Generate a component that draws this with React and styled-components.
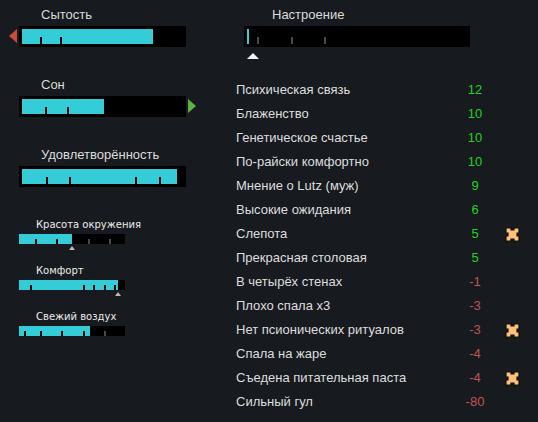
import React from 'react';
import styled, { createGlobalStyle } from 'styled-components';

const GlobalStyle = createGlobalStyle`
  html, body {
    margin: 0;
    background: #171a1e;
  }
  body {
    font-family: "Liberation Sans", Arial, sans-serif;
    color: #dcdcdc;
  }
`;

const CYAN = '#33ccd7';

const Page = styled.div`
  display: flex;
  width: 538px;
  height: 422px;
  overflow: hidden;
`;

const LeftColumn = styled.div`
  width: 220px;
  padding: 7px 0 0 19px;
  box-sizing: border-box;
  display: flex;
  flex-direction: column;
`;

const NeedBlock = styled.div`
  display: flex;
  flex-direction: column;
  gap: 3px;
  margin-bottom: 30px;
`;

const NeedLabel = styled.div`
  font-size: 13px;
  line-height: 16px;
  padding-left: ${({ indent }) => indent || 22}px;
`;

const BigBar = styled.div`
  position: relative;
  width: ${({ width }) => width}px;
  height: 21px;
  padding: 3px;
  box-sizing: border-box;
  background: #000;
`;

const BarInner = styled.div`
  position: relative;
  width: 100%;
  height: 100%;
`;

const Fill = styled.div`
  height: 100%;
  background: ${CYAN};
`;

const Tick = styled.div`
  position: absolute;
  bottom: 0;
  width: 2px;
  height: ${({ h }) => h}px;
  background: ${({ light }) => (light ? '#4a4a4a' : '#000')};
`;

const Arrow = styled.div`
  position: absolute;
  top: 3px;
  width: 0;
  height: 0;
  border-top: 7.5px solid transparent;
  border-bottom: 7.5px solid transparent;
  ${({ dir }) =>
    dir === 'left'
      ? `left: -10px; border-right: 8px solid #c84b3c;`
      : `right: -10px; border-left: 8px solid #5bb443;`}
`;

const SmallSection = styled.div`
  margin-top: 2px;
  display: flex;
  flex-direction: column;
  gap: 15px;
`;

const SmallBlock = styled.div`
  display: flex;
  flex-direction: column;
`;

const SmallLabel = styled.div`
  font-family: "DejaVu Sans", sans-serif;
  font-size: 10px;
  line-height: 12px;
  padding-left: 17px;
  margin-bottom: 3px;
  color: #ececec;
`;

const SmallBar = styled.div`
  position: relative;
  width: 106px;
  height: 10px;
  background: #000;
`;

const MarkerRow = styled.div`
  position: relative;
  height: 6px;
  width: 106px;
`;

const SmallMarker = styled.div`
  position: absolute;
  top: 2px;
  width: 0;
  height: 0;
  border-left: 3px solid transparent;
  border-right: 3px solid transparent;
  border-bottom: 4px solid #b8b8b8;
`;

const RightColumn = styled.div`
  flex: 1;
  padding-top: 7px;
  display: flex;
  flex-direction: column;
`;

const MoodBlock = styled.div`
  display: flex;
  flex-direction: column;
  gap: 3px;
  padding-left: 24px;
`;

const MoodMarker = styled.div`
  margin: 3px 0 0 3px;
  width: 0;
  height: 0;
  border-left: 6px solid transparent;
  border-right: 6px solid transparent;
  border-bottom: 6px solid #f2f2f2;
`;

const ThoughtList = styled.div`
  margin-top: 19px;
  padding-left: 16px;
  display: flex;
  flex-direction: column;
`;

const ThoughtRow = styled.div`
  display: grid;
  grid-template-columns: 220px 38px 27px;
  align-items: center;
  height: 24px;
  font-size: 13px;
  line-height: 24px;
`;

const ThoughtName = styled.span`
  color: #dedede;
  white-space: nowrap;
`;

const ThoughtValue = styled.span`
  text-align: center;
  color: ${({ positive }) => (positive ? '#22d322' : '#c05555')};
`;

const IconSlot = styled.span`
  display: flex;
  align-items: center;
  padding-left: 10px;
  svg {
    flex-shrink: 0;
  }
`;

const needs = [
  { label: 'Сытость', fill: 131, ticks: [18, 38], arrow: 'left' },
  { label: 'Сон', fill: 82, ticks: [23, 45], arrow: 'right' },
  { label: 'Удовлетворённость', fill: 155, ticks: [24, 47, 113, 137] },
];

const smallNeeds = [
  { label: 'Красота окружения', fill: 53, ticks: [16, 37, 69, 90], marker: true },
  { label: 'Комфорт', fill: 99, ticks: [11, 64, 74, 85, 95], marker: true },
  { label: 'Свежий воздух', fill: 71, ticks: [5, 21, 42, 64, 85] },
];

const thoughts = [
  { name: 'Психическая связь', value: '12' },
  { name: 'Блаженство', value: '10' },
  { name: 'Генетическое счастье', value: '10' },
  { name: 'По-райски комфортно', value: '10' },
  { name: 'Мнение о Lutz (муж)', value: '9' },
  { name: 'Высокие ожидания', value: '6' },
  { name: 'Слепота', value: '5', icon: true },
  { name: 'Прекрасная столовая', value: '5' },
  { name: 'В четырёх стенах', value: '-1' },
  { name: 'Плохо спала x3', value: '-3' },
  { name: 'Нет псионических ритуалов', value: '-3', icon: true },
  { name: 'Спала на жаре', value: '-4' },
  { name: 'Съедена питательная паста', value: '-4', icon: true },
  { name: 'Сильный гул', value: '-80' },
];

const IdeoIcon = () => (
  <svg width="17" height="17" viewBox="0 0 17 17">
    <path
      d="M2 2h5v2h3V2h5v5h-2v3h2v5h-5v-2H7v2H2v-5h2V7H2z"
      fill="#ffc27a"
      stroke="#140e06"
      strokeWidth="1.2"
      strokeLinejoin="miter"
    />
  </svg>
);

const App = () => (
  <>
    <GlobalStyle />
    <Page>
      <LeftColumn>
        {needs.map((n) => (
          <NeedBlock key={n.label}>
            <NeedLabel>{n.label}</NeedLabel>
            <BigBar width={167}>
              <BarInner>
                <Fill style={{ width: n.fill }} />
                {n.ticks.map((t) => (
                  <Tick key={t} h={7} style={{ left: t }} light={t > n.fill} />
                ))}
              </BarInner>
              {n.arrow && <Arrow dir={n.arrow} />}
            </BigBar>
          </NeedBlock>
        ))}
        <SmallSection>
          {smallNeeds.map((n) => (
            <SmallBlock key={n.label}>
              <SmallLabel>{n.label}</SmallLabel>
              <SmallBar>
                <Fill style={{ width: n.fill }} />
                {n.ticks.map((t) => (
                  <Tick key={t} h={5} style={{ left: t }} light={t > n.fill} />
                ))}
              </SmallBar>
              <MarkerRow>
                {n.marker && <SmallMarker style={{ left: n.fill - 3 }} />}
              </MarkerRow>
            </SmallBlock>
          ))}
        </SmallSection>
      </LeftColumn>
      <RightColumn>
        <MoodBlock>
          <NeedLabel indent={28}>Настроение</NeedLabel>
          <BigBar width={226}>
            <BarInner>
              <Fill style={{ width: 2 }} />
              {[10, 44, 77].map((t) => (
                <Tick key={t} h={7} style={{ left: t }} light />
              ))}
            </BarInner>
          </BigBar>
          <MoodMarker />
        </MoodBlock>
        <ThoughtList>
          {thoughts.map((t) => (
            <ThoughtRow key={t.name}>
              <ThoughtName>{t.name}</ThoughtName>
              <ThoughtValue positive={!t.value.startsWith('-')}>{t.value}</ThoughtValue>
              <IconSlot>{t.icon && <IdeoIcon />}</IconSlot>
            </ThoughtRow>
          ))}
        </ThoughtList>
      </RightColumn>
    </Page>
  </>
);

export default App;
